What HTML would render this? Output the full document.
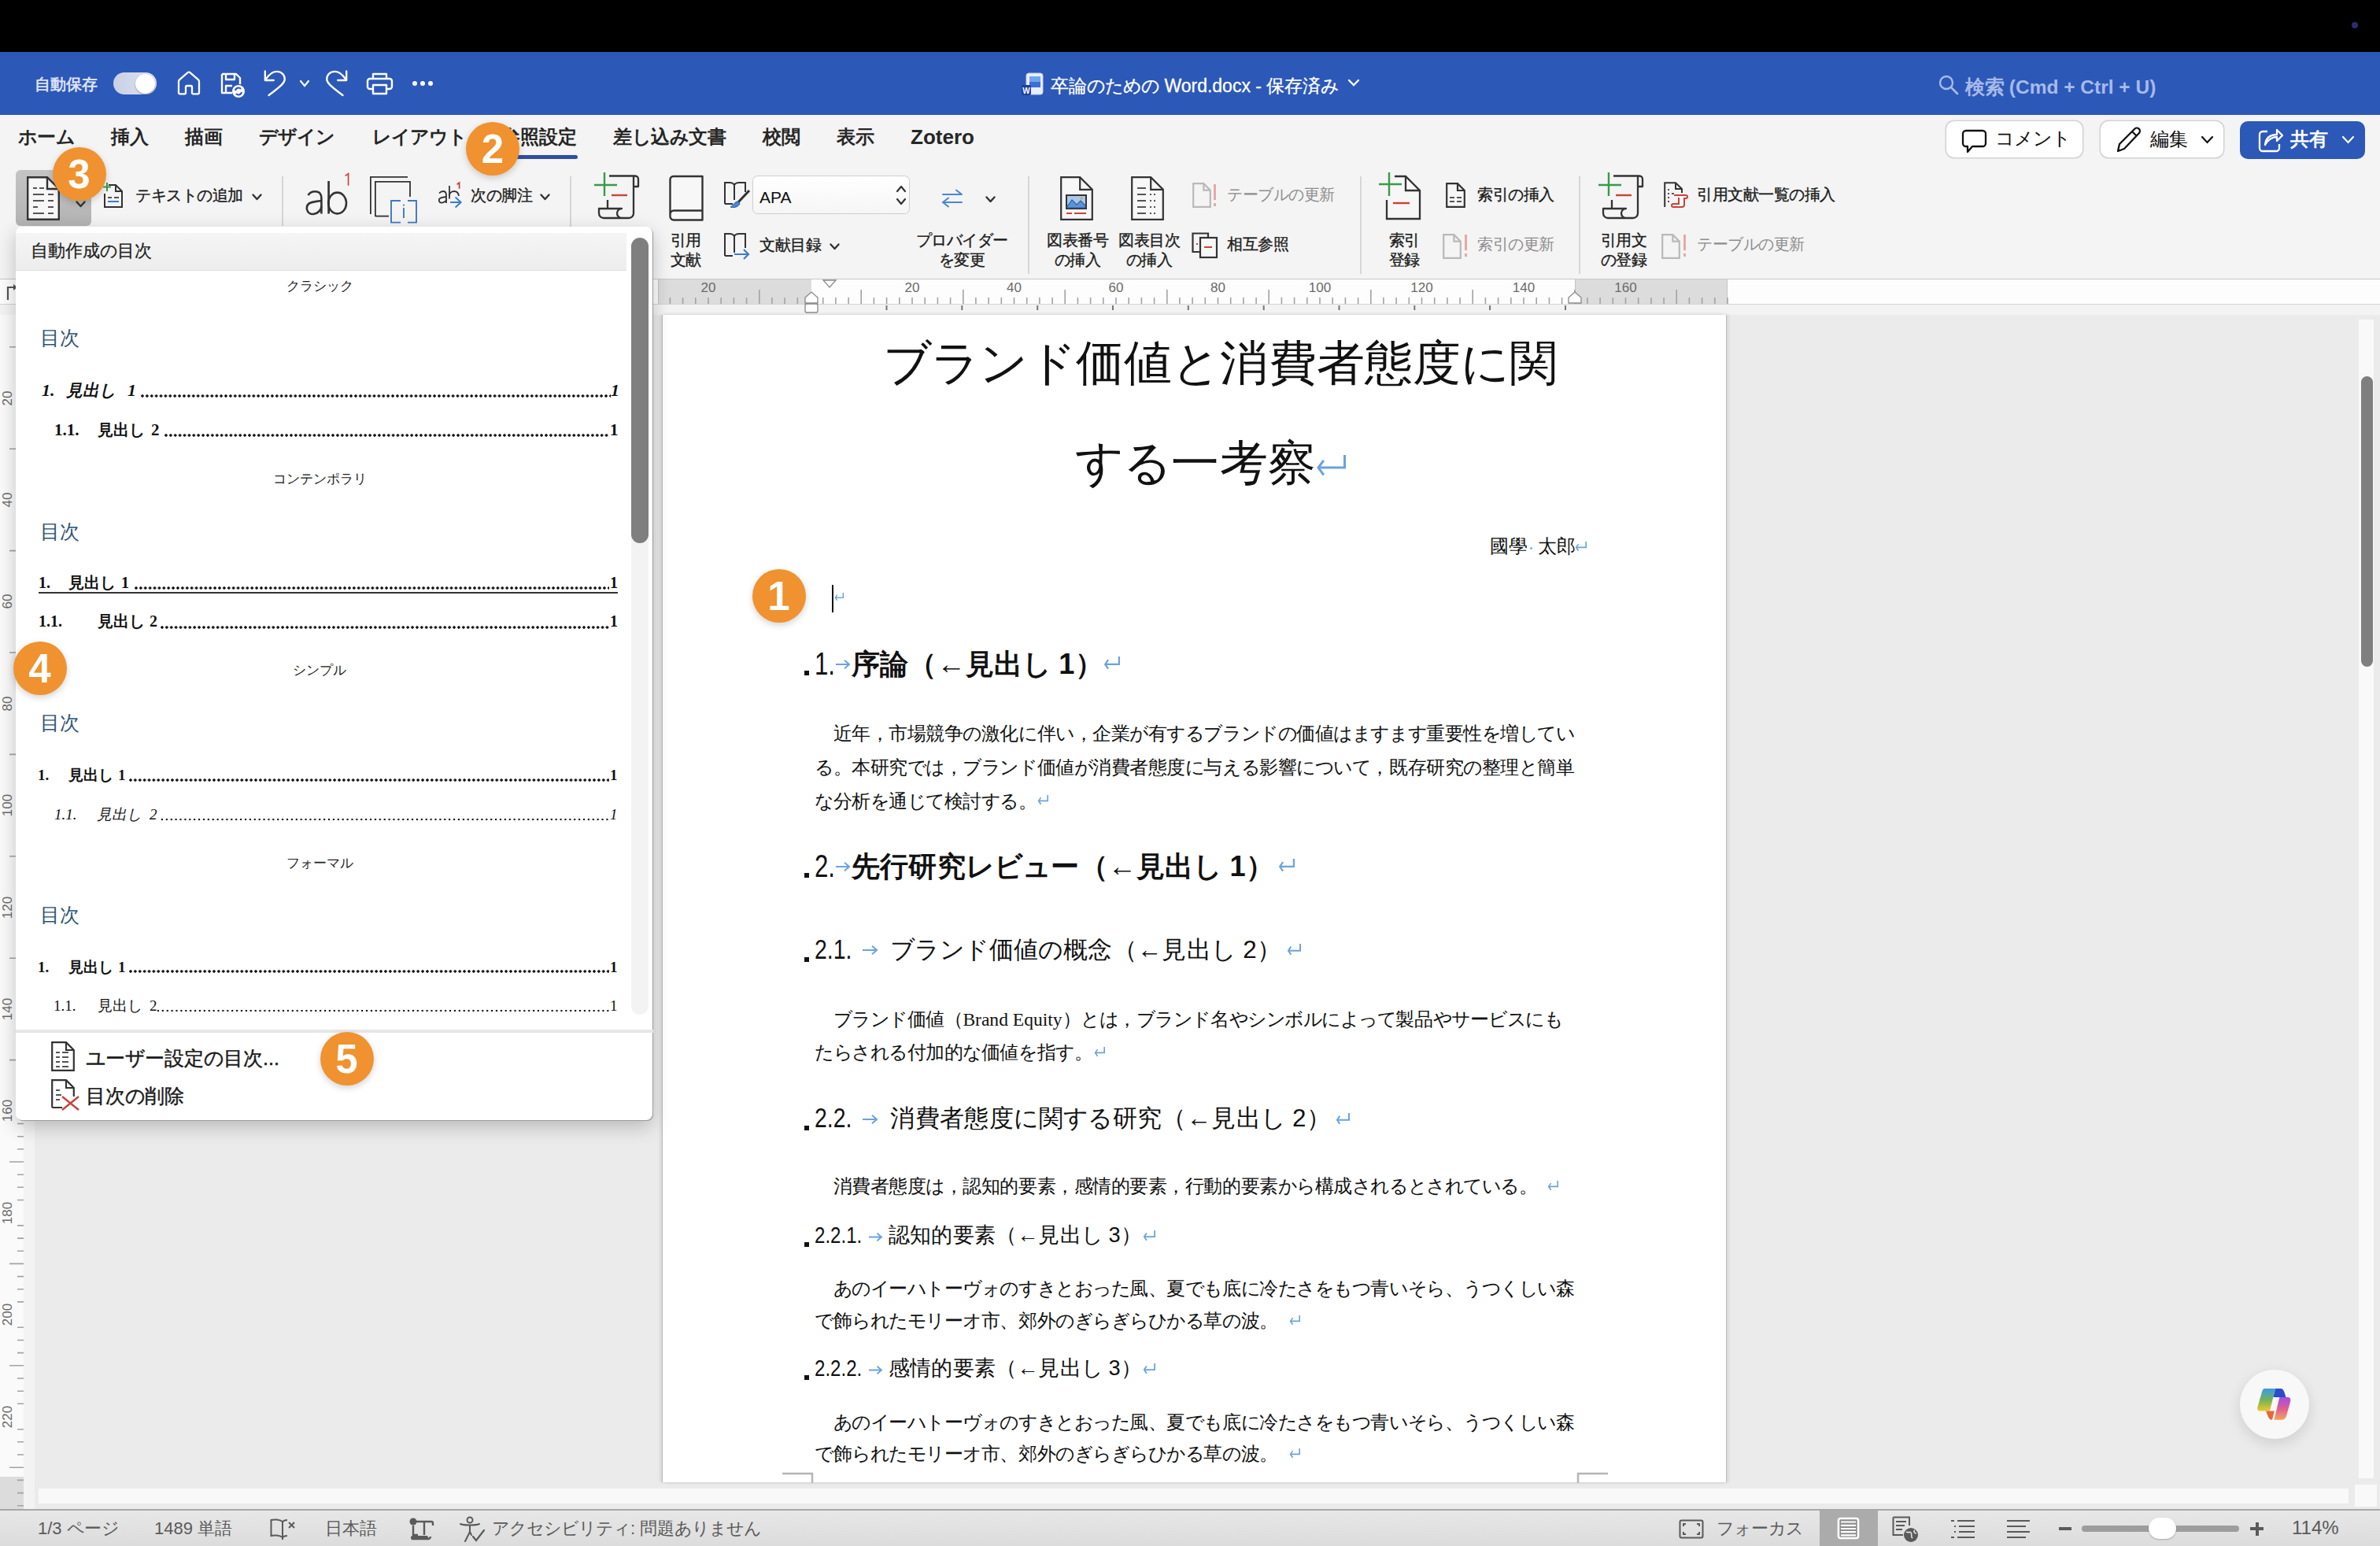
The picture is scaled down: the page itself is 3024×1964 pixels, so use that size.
<!DOCTYPE html>
<html><head><meta charset="utf-8">
<style>
html,body{margin:0;padding:0;}
body{width:3024px;height:1964px;position:relative;overflow:hidden;background:#ebebeb;font-family:"Liberation Sans",sans-serif;color:#222;}
.a{position:absolute;}
.t{position:absolute;white-space:nowrap;line-height:1;}
svg{position:absolute;overflow:visible;}
c{display:inline-block;width:1em;text-align:center;font-family:"Liberation Sans",sans-serif;font-style:normal;}
.it c{transform:skewX(-12deg);}
.circ{position:absolute;width:68px;height:68px;border-radius:50%;background:#f0922f;color:#fff;font:bold 51px/70px "Liberation Sans",sans-serif;text-align:center;box-shadow:0 3px 8px rgba(0,0,0,0.18);}
</style></head><body>
<!-- top black bar -->
<div class="a" style="left:0;top:0;width:3024px;height:66px;background:#000"></div>
<div class="a" style="left:2988px;top:28px;width:8px;height:8px;border-radius:50%;background:#2f2b72"></div>
<!-- title bar -->
<div class="a" id="titlebar" style="left:0;top:66px;width:3024px;height:80px;background:#2c58b8"></div>
<!-- title bar content -->
<div class="t" style="left:44px;top:97px;font-size:20px;font-weight:bold;color:#dde2f4"><c>自</c><c>動</c><c>保</c><c>存</c></div>
<div class="a" style="left:144px;top:92px;width:55px;height:28px;border-radius:14px;background:linear-gradient(90deg,#c9d0e6,#dfe3f0)"></div>
<div class="a" style="left:172px;top:94px;width:25px;height:25px;border-radius:50%;background:#fff;box-shadow:0 1px 2px rgba(0,0,0,0.35)"></div>
<svg style="left:225px;top:90px" width="30" height="31" viewBox="0 0 30 31"><path d="M2 13.5 C2 12.5 2.4 11.8 3.2 11.1 L13.3 2.4 C14.3 1.5 15.7 1.5 16.7 2.4 L26.8 11.1 C27.6 11.8 28 12.5 28 13.5 V27.5 C28 28.6 27.3 29.3 26.2 29.3 H20.5 C19.6 29.3 19 28.7 19 27.8 V20.5 C19 19.6 18.4 19 17.5 19 H12.5 C11.6 19 11 19.6 11 20.5 V27.8 C11 28.7 10.4 29.3 9.5 29.3 H3.8 C2.7 29.3 2 28.6 2 27.5 Z" fill="none" stroke="#fff" stroke-width="2.3" stroke-linejoin="round"/></svg>
<svg style="left:279px;top:91px" width="34" height="34" viewBox="0 0 34 34"><path d="M3 3 H21 L26 8 V16 M3 3 V27 H16 M8 3 V10 H19 V3 M8 27 V18 H16" fill="none" stroke="#fff" stroke-width="2.4" stroke-linejoin="round"/><circle cx="24" cy="25" r="8" fill="#fff"/><path d="M20 24 a4 4 0 0 1 7-2 M28 26 a4 4 0 0 1 -7 2" fill="none" stroke="#2c58b8" stroke-width="2"/></svg>
<svg style="left:335px;top:90px" width="30" height="34" viewBox="0 0 30 34"><path d="M1.8 0.5 V12 H12.8 M2.5 11 C7 4 11 0.8 16.5 0.8 C22.5 0.8 26.8 5 26.8 10.5 C26.8 14.5 24 18 6.5 31" fill="none" stroke="#fff" stroke-width="2.3" stroke-linecap="round" stroke-linejoin="round"/></svg>
<svg style="left:380px;top:101px" width="14" height="10" viewBox="0 0 14 10"><path d="M2 2 L7 8 L12 2" fill="none" stroke="#fff" stroke-width="2.2" stroke-linecap="round"/></svg>
<svg style="left:412px;top:90px" width="30" height="34" viewBox="0 0 30 34"><g transform="translate(30,0) scale(-1,1)"><path d="M1.8 0.5 V12 H12.8 M2.5 11 C7 4 11 0.8 16.5 0.8 C22.5 0.8 26.8 5 26.8 10.5 C26.8 14.5 24 18 6.5 31" fill="none" stroke="#fff" stroke-width="2.3" stroke-linecap="round" stroke-linejoin="round"/></g></svg>
<svg style="left:466px;top:91px" width="33" height="30" viewBox="0 0 33 30"><path d="M8 9 V3 H25 V9 M8 22 H4 a3 3 0 0 1 -3 -3 V12 a3 3 0 0 1 3 -3 H29 a3 3 0 0 1 3 3 V19 a3 3 0 0 1 -3 3 H25 M8 17 H25 V28 H8 Z" fill="none" stroke="#fff" stroke-width="2.4" stroke-linejoin="round"/></svg>
<div class="a" style="left:524px;top:103px;width:6px;height:6px;border-radius:50%;background:#fff"></div>
<div class="a" style="left:534px;top:103px;width:6px;height:6px;border-radius:50%;background:#fff"></div>
<div class="a" style="left:544px;top:103px;width:6px;height:6px;border-radius:50%;background:#fff"></div>
<!-- doc title -->
<svg style="left:1297px;top:92px" width="30" height="30" viewBox="0 0 30 30"><rect x="7" y="1" width="21" height="27" rx="3" fill="#e9eefb" stroke="#c5cde6"/><rect x="11" y="5" width="14" height="14" fill="#6fa7ef"/><rect x="11" y="12" width="14" height="7" fill="#3f6ed6"/><rect x="1" y="16" width="12" height="13" rx="2" fill="#1d3f9c"/><text x="7" y="26.5" font-size="10" font-weight="bold" fill="#fff" text-anchor="middle" font-family="Liberation Sans">W</text></svg>
<div class="t" style="left:1335px;top:98px;font-size:23px;color:#fff;-webkit-text-stroke:0.3px #fff"><c>卒</c><c>論</c><c>の</c><c>た</c><c>め</c><c>の</c> Word.docx - <c>保</c><c>存</c><c>済</c><c>み</c></div>
<svg style="left:1712px;top:100px" width="16" height="10" viewBox="0 0 16 10"><path d="M2 2 L8 8 L14 2" fill="none" stroke="#fff" stroke-width="2.4" stroke-linecap="round"/></svg>
<!-- search -->
<svg style="left:2463px;top:95px" width="26" height="26" viewBox="0 0 26 26"><circle cx="10" cy="10" r="8" fill="none" stroke="#a8baea" stroke-width="2.4"/><path d="M16 16 L24 24" stroke="#a8baea" stroke-width="2.6" stroke-linecap="round"/></svg>
<div class="t" style="left:2497px;top:99px;font-size:24.5px;font-weight:bold;color:#a8baea"><c>検</c><c>索</c> (Cmd + Ctrl + U)</div>
<!-- ribbon -->
<div class="a" id="ribbon" style="left:0;top:146px;width:3024px;height:208px;background:#f4f4f4;border-bottom:1px solid #c8c8c8"></div>
<!-- tabs -->
<div class="t" style="left:23px;top:162px;font-size:24px;font-weight:bold;color:#262626"><c>ホ</c><c>ー</c><c>ム</c></div>
<div class="t" style="left:141px;top:162px;font-size:24px;font-weight:bold;color:#262626"><c>挿</c><c>入</c></div>
<div class="t" style="left:235px;top:162px;font-size:24px;font-weight:bold;color:#262626"><c>描</c><c>画</c></div>
<div class="t" style="left:329px;top:162px;font-size:24px;font-weight:bold;color:#262626"><c>デ</c><c>ザ</c><c>イ</c><c>ン</c></div>
<div class="t" style="left:473px;top:162px;font-size:24px;font-weight:bold;color:#262626"><c>レ</c><c>イ</c><c>ア</c><c>ウ</c><c>ト</c></div>
<div class="t" style="left:637px;top:162px;font-size:24px;font-weight:bold;color:#262626"><c>参</c><c>照</c><c>設</c><c>定</c></div>
<div class="a" style="left:655px;top:197px;width:79px;height:5px;border-radius:3px;background:#2f4f9e"></div>
<div class="t" style="left:779px;top:162px;font-size:24px;font-weight:bold;color:#262626"><c>差</c><c>し</c><c>込</c><c>み</c><c>文</c><c>書</c></div>
<div class="t" style="left:969px;top:162px;font-size:24px;font-weight:bold;color:#262626"><c>校</c><c>閲</c></div>
<div class="t" style="left:1063px;top:162px;font-size:24px;font-weight:bold;color:#262626"><c>表</c><c>示</c></div>
<div class="t" style="left:1157px;top:161px;font-size:26px;font-weight:bold;color:#262626">Zotero</div>
<!-- right buttons -->
<div class="a" style="left:2473px;top:154px;width:173px;height:46px;border-radius:10px;background:#fff;box-shadow:0 0 0 1.5px #d2d2d2"></div>
<svg style="left:2492px;top:164px" width="34" height="32" viewBox="0 0 34 32"><path d="M6 2 H27 a4 4 0 0 1 4 4 V18 a4 4 0 0 1 -4 4 H14 L8 29 V22 H6 a4 4 0 0 1 -4 -4 V6 a4 4 0 0 1 4 -4 Z" fill="none" stroke="#111" stroke-width="2.3" stroke-linejoin="round"/></svg>
<div class="t" style="left:2535px;top:164px;font-size:24px;color:#111"><c>コ</c><c>メ</c><c>ン</c><c>ト</c></div>
<div class="a" style="left:2669px;top:154px;width:156px;height:46px;border-radius:10px;background:#fff;box-shadow:0 0 0 1.5px #d2d2d2"></div>
<svg style="left:2688px;top:161px" width="34" height="34" viewBox="0 0 34 34"><path d="M3 31 L5 22 L24 3 a3.5 3.5 0 0 1 6 5 L11 28 Z M21 6 L27 12" fill="none" stroke="#111" stroke-width="2.3" stroke-linejoin="round"/></svg>
<div class="t" style="left:2732px;top:165px;font-size:24px;color:#111"><c>編</c><c>集</c></div>
<svg style="left:2796px;top:172px" width="17" height="11" viewBox="0 0 17 11"><path d="M2 2 L8.5 9 L15 2" fill="none" stroke="#111" stroke-width="2.2" stroke-linecap="round"/></svg>
<div class="a" style="left:2846px;top:154px;width:159px;height:48px;border-radius:10px;background:#2c58b8"></div>
<svg style="left:2868px;top:161px" width="34" height="34" viewBox="0 0 34 34"><path d="M13 6 H7 a4 4 0 0 0 -4 4 V27 a4 4 0 0 0 4 4 H24 a4 4 0 0 0 4 -4 V22 M10 23 C11 14 17 10 25 10 V4 L32 11 L25 18 V13 C19 13 14 16 10 23 Z" fill="none" stroke="#fff" stroke-width="2.3" stroke-linejoin="round"/></svg>
<div class="t" style="left:2910px;top:165px;font-size:24px;font-weight:bold;color:#fff"><c>共</c><c>有</c></div>
<svg style="left:2975px;top:172px" width="17" height="11" viewBox="0 0 17 11"><path d="M2 2 L8.5 9 L15 2" fill="none" stroke="#fff" stroke-width="2.2" stroke-linecap="round"/></svg>
<!-- ribbon tools -->
<div class="a" style="left:20px;top:216px;width:96px;height:71px;border-radius:6px;background:linear-gradient(#c4c4c4,#b3b3b3)"></div>
<svg style="left:34px;top:224px" width="42" height="56" viewBox="0 0 42 56"><path d="M1.2 1.2 H26 L40.8 16 V54.8 H1.2 Z" fill="#f7f7f7" stroke="#333" stroke-width="2.4" stroke-linejoin="miter"/><path d="M26 1.2 V16 H40.8" fill="none" stroke="#333" stroke-width="2.4"/><path d="M8 15 H13 M16 15 H22 M8 23 H22 M27 23 H34 M8 31 H22 M27 31 H34 M8 39 H14 M27 39 H34 M8 47 H22 M27 47 H34" stroke="#555" stroke-width="2.2"/></svg>
<svg style="left:96px;top:255px" width="13" height="9" viewBox="0 0 13 9"><path d="M1.5 1.5 L6.5 7 L11.5 1.5" fill="none" stroke="#333" stroke-width="2.4" stroke-linecap="round" stroke-linejoin="round"/></svg>
<svg style="left:131px;top:231px" width="26" height="34" viewBox="0 0 26 34"><path d="M7 4 H16 L24 12 V32 H2 V15" fill="none" stroke="#333" stroke-width="2"/><path d="M16 4 V12 H24" fill="none" stroke="#333" stroke-width="2"/><path d="M5 1 V12 M0 6.5 H10" stroke="#3a9a4a" stroke-width="2"/><path d="M6 20 H11 M14 20 H20 M6 25 H11 M14 25 H20" stroke="#555" stroke-width="1.8"/><path d="M6 25 H20" stroke="#3d7cc9" stroke-width="2"/></svg>
<div class="t" style="left:172px;top:239px;font-size:19.5px;color:#1c1c1c;-webkit-text-stroke:0.35px #1c1c1c"><c>テ</c><c>キ</c><c>ス</c><c>ト</c><c>の</c><c>追</c><c>加</c></div>
<svg style="left:320px;top:246px" width="13" height="9" viewBox="0 0 13 9"><path d="M1.5 1.5 L6.5 7 L11.5 1.5" fill="none" stroke="#333" stroke-width="2.4" stroke-linecap="round" stroke-linejoin="round"/></svg>
<div class="a" style="left:358px;top:224px;width:2px;height:63px;background:#d6d6d6"></div>
<svg style="left:380px;top:210px" width="70" height="70" viewBox="0 0 70 70"><path d="M37.6 20 V61.5" stroke="#333" stroke-width="2.7"/><ellipse cx="48.6" cy="48" rx="11.4" ry="13.4" fill="none" stroke="#333" stroke-width="2.6"/><path d="M11.5 38 C14 34 18 33.3 20.5 33.3 C26 33.3 28.4 36.5 28.4 42 V61.5" fill="none" stroke="#333" stroke-width="2.6"/><path d="M28.4 45 C20 46 16 46.8 13.5 48 C10 50 9.5 53 10 56 C11 60.5 15 62.5 19 61.8 C24 61 28 57 28.4 52" fill="none" stroke="#333" stroke-width="2.6"/><path d="M58.6 13.4 L62.6 10.6 V25.8" fill="none" stroke="#c8443a" stroke-width="1.7"/></svg>
<svg style="left:469px;top:223px" width="64" height="64" viewBox="0 0 64 64"><path d="M1.9 49 V1.9 H49" fill="none" stroke="#333" stroke-width="1.8"/><path d="M7.9 52 V7.9 H52 V27" fill="none" stroke="#333" stroke-width="1.8"/><path d="M7.9 51.6 H25" stroke="#333" stroke-width="1.8"/><path d="M40 32 H28 V59.6 H40 M49 32 H60 V59.6 H49" fill="none" stroke="#4079b8" stroke-width="1.9"/><path d="M44 41 V54" stroke="#4079b8" stroke-width="1.9"/><circle cx="44" cy="37.6" r="1.1" fill="#4079b8"/></svg>
<svg style="left:550px;top:225px" width="50" height="45" viewBox="0 0 50 45"><path d="M21 11 V27.6" stroke="#333" stroke-width="1.8"/><path d="M21 24 C21 20 24 18 27 18 C30 18 32.5 20 32.9 24" fill="none" stroke="#333" stroke-width="1.8"/><path d="M8 20.5 C9.5 18.8 11.5 18 13 18 C16 18 17 20 17 23 V32.9" fill="none" stroke="#333" stroke-width="1.8"/><path d="M17 25 C13 25.5 10.5 26 9 27 C7 28.5 7.5 32.5 11 32.6 C14 32.7 17 30.5 17 28.5" fill="none" stroke="#333" stroke-width="1.8"/><path d="M30.6 9.3 L33.6 7.3 V14.8" fill="none" stroke="#c8443a" stroke-width="1.8"/><path d="M22 32 H35.5 M28.6 25.4 L35.6 32 L28.6 38.5" fill="none" stroke="#3d7cc9" stroke-width="2"/></svg>
<div class="t" style="left:598px;top:239px;font-size:19.5px;color:#1c1c1c;-webkit-text-stroke:0.35px #1c1c1c"><c>次</c><c>の</c><c>脚</c><c>注</c></div>
<svg style="left:686px;top:246px" width="13" height="9" viewBox="0 0 13 9"><path d="M1.5 1.5 L6.5 7 L11.5 1.5" fill="none" stroke="#333" stroke-width="2.4" stroke-linecap="round" stroke-linejoin="round"/></svg>
<div class="a" style="left:724px;top:224px;width:2px;height:124px;background:#d6d6d6"></div>
<svg style="left:755px;top:219px" width="60" height="62" viewBox="0 0 60 62"><path d="M19 4.5 H52 a4 4 0 0 1 4 4 V18 H50 M52 4.5 a2 2 0 0 0 -2 2 V52 a6 6 0 0 1 -6 6 H12 a6 6 0 0 1 -6 -6 V46 H35 a6 6 0 0 0 0 12 M17 46 V35" fill="none" stroke="#333" stroke-width="2.3" stroke-linejoin="round"/><path d="M13 0 V30 M0 16 H29" stroke="#3a9a4a" stroke-width="2.4"/><path d="M22 29 H42" stroke="#c8443a" stroke-width="2.4"/></svg>
<svg style="left:850px;top:223px" width="44" height="58" viewBox="0 0 44 58"><path d="M1.5 49 V5 a4 4 0 0 1 4 -4 H42.5 V56.5 H6 a4.5 4.5 0 0 1 -4.5 -4.5 V49 a4.5 4.5 0 0 1 4.5 -4.5 H42.5" fill="#f7f7f7" stroke="#333" stroke-width="2.4" stroke-linejoin="round"/></svg>
<div class="t" style="left:811px;width:120px;text-align:center;top:293px;font-size:19.5px;color:#1c1c1c;-webkit-text-stroke:0.35px #1c1c1c;line-height:25px"><c>引</c><c>用</c><br><c>文</c><c>献</c></div>
<svg style="left:919px;top:230px" width="36" height="36" viewBox="0 0 36 36"><path d="M2 29 V2 H8 C11 2 13 3 14 5 C15 3 17 2 20 2 H28 V14 M14 5 V24 M2 29 H12" fill="none" stroke="#333" stroke-width="2"/><path d="M33 12 L18 28" stroke="#333" stroke-width="3"/><path d="M19 26 C14 26 13 31 9 33 C16 35 21 31 21 28 Z" fill="#4a86d0" stroke="#2f5e9e" stroke-width="1"/></svg>
<div class="a" style="left:957px;top:224px;width:198px;height:47px;border-radius:6px;background:linear-gradient(#fff,#f6f6f6);box-shadow:0 0 0 1px #cfcfcf"></div>
<div class="t" style="left:965px;top:240px;font-size:21px;color:#111">APA</div>
<svg style="left:1138px;top:234px" width="14" height="28" viewBox="0 0 14 28"><path d="M2 9 L7 3 L12 9 M2 19 L7 25 L12 19" fill="none" stroke="#333" stroke-width="2.2" stroke-linecap="round" stroke-linejoin="round"/></svg>
<svg style="left:1196px;top:240px" width="28" height="24" viewBox="0 0 28 24"><path d="M2 7 H26 M19 1.5 L26 7 M2 17 H26 M9 11.5 L2 17 L9 22.5" fill="none" stroke="#4a86d0" stroke-width="2" stroke-linecap="round"/></svg>
<svg style="left:1252px;top:249px" width="13" height="9" viewBox="0 0 13 9"><path d="M1.5 1.5 L6.5 7 L11.5 1.5" fill="none" stroke="#333" stroke-width="2.4" stroke-linecap="round" stroke-linejoin="round"/></svg>
<svg style="left:919px;top:295px" width="36" height="34" viewBox="0 0 36 34"><path d="M2 30 V2 H8 C11 2 13 3 14 5 C15 3 17 2 20 2 H28 V20 M14 5 V26 M2 30 H12" fill="none" stroke="#333" stroke-width="2"/><path d="M14 28 H32 M26 22 L32 28 L26 34" fill="none" stroke="#3d7cc9" stroke-width="2.2"/></svg>
<div class="t" style="left:965px;top:302px;font-size:19.5px;color:#1c1c1c;-webkit-text-stroke:0.35px #1c1c1c"><c>文</c><c>献</c><c>目</c><c>録</c></div>
<svg style="left:1054px;top:309px" width="13" height="9" viewBox="0 0 13 9"><path d="M1.5 1.5 L6.5 7 L11.5 1.5" fill="none" stroke="#333" stroke-width="2.4" stroke-linecap="round" stroke-linejoin="round"/></svg>
<div class="t" style="left:1162px;width:120px;text-align:center;top:293px;font-size:19.5px;color:#1c1c1c;-webkit-text-stroke:0.35px #1c1c1c;line-height:25px"><c>プ</c><c>ロ</c><c>バ</c><c>イ</c><c>ダ</c><c>ー</c><br><c>を</c><c>変</c><c>更</c></div>
<div class="a" style="left:1306px;top:224px;width:2px;height:124px;background:#d6d6d6"></div>
<svg style="left:1347px;top:224px" width="42" height="56" viewBox="0 0 42 56"><path d="M1.2 1.2 H25.2 L40.8 16.8 V54.8 H1.2 Z" fill="#f7f7f7" stroke="#333" stroke-width="2.2"/><path d="M25.2 1.2 V16.8 H40.8" fill="none" stroke="#333" stroke-width="2.2"/><rect x="8" y="24" width="25" height="17" fill="#a9c8ec" stroke="#333" stroke-width="2"/><path d="M9 38 L15 30 L21 36 L26 31 L32 37 V40 H9 Z" fill="#5b93d6" stroke="#2f5e9e" stroke-width="1.2"/><circle cx="27" cy="28" r="1.5" fill="#e8a030"/><path d="M8 47 H15 M18 47 H33" stroke="#c8443a" stroke-width="2.2"/></svg>
<div class="t" style="left:1309px;width:120px;text-align:center;top:293px;font-size:19.5px;color:#1c1c1c;-webkit-text-stroke:0.35px #1c1c1c;line-height:25px"><c>図</c><c>表</c><c>番</c><c>号</c><br><c>の</c><c>挿</c><c>入</c></div>
<svg style="left:1437px;top:224px" width="42" height="56" viewBox="0 0 42 56"><path d="M1.2 1.2 H25.2 L40.8 16.8 V54.8 H1.2 Z" fill="#f7f7f7" stroke="#333" stroke-width="2.2"/><path d="M25.2 1.2 V16.8 H40.8" fill="none" stroke="#333" stroke-width="2.2"/><path d="M8 15 H19 M8 23 H19 M24 23 H26 M29 23 H31 M8 31 H19 M24 31 H26 M29 31 H31 M8 39 H19 M24 39 H26 M29 39 H31 M8 47 H19 M24 47 H26 M29 47 H31" stroke="#555" stroke-width="2"/></svg>
<div class="t" style="left:1400px;width:120px;text-align:center;top:293px;font-size:19.5px;color:#1c1c1c;-webkit-text-stroke:0.35px #1c1c1c;line-height:25px"><c>図</c><c>表</c><c>目</c><c>次</c><br><c>の</c><c>挿</c><c>入</c></div>
<svg style="left:1515px;top:232px" width="24" height="32" viewBox="0 0 24 32"><path d="M1.2 1.2 H14.4 L22.8 9.6 V30.8 H1.2 Z" fill="none" stroke="#b9b9b9" stroke-width="2.2"/><path d="M14.4 1.2 V9.6 H22.8" fill="none" stroke="#b9b9b9" stroke-width="2.2"/></svg>
<div class="a" style="left:1542px;top:234px;width:3px;height:20px;background:#e6a9a4"></div><div class="a" style="left:1542px;top:258px;width:3px;height:4px;background:#e6a9a4"></div>
<div class="t" style="left:1559px;top:238px;font-size:19.5px;color:#8e8e8e"><c>テ</c><c>ー</c><c>ブ</c><c>ル</c><c>の</c><c>更</c><c>新</c></div>
<svg style="left:1514px;top:295px" width="34" height="34" viewBox="0 0 34 34"><path d="M21 7 V1.5 H1.5 V25 H10" fill="none" stroke="#333" stroke-width="2.2"/><rect x="11" y="7" width="21" height="25" fill="#f7f7f7" stroke="#333" stroke-width="2.2"/><path d="M6 15 H8 M16 19 H26" stroke="#c8443a" stroke-width="2.2"/></svg>
<div class="t" style="left:1559px;top:301px;font-size:19.5px;color:#1c1c1c;-webkit-text-stroke:0.35px #1c1c1c"><c>相</c><c>互</c><c>参</c><c>照</c></div>
<div class="a" style="left:1728px;top:224px;width:2px;height:124px;background:#d6d6d6"></div>
<svg style="left:1752px;top:219px" width="56" height="62" viewBox="0 0 56 62"><path d="M20 5 H34 L52 23 V59 H10 V35" fill="#f7f7f7" stroke="#333" stroke-width="2.3"/><path d="M34 5 V23 H52" fill="none" stroke="#333" stroke-width="2.3"/><path d="M13 0 V30 M0 15 H29" stroke="#3a9a4a" stroke-width="2.4"/><path d="M18 39 H39" stroke="#c8443a" stroke-width="2.4"/></svg>
<div class="t" style="left:1724px;width:120px;text-align:center;top:293px;font-size:19.5px;color:#1c1c1c;-webkit-text-stroke:0.35px #1c1c1c;line-height:25px"><c>索</c><c>引</c><br><c>登</c><c>録</c></div>
<svg style="left:1837px;top:232px" width="25" height="32" viewBox="0 0 25 32"><path d="M1.2 1.2 H15.0 L23.8 10.0 V30.8 H1.2 Z" fill="#f7f7f7" stroke="#333" stroke-width="2.2"/><path d="M15.0 1.2 V10.0 H23.8" fill="none" stroke="#333" stroke-width="2.2"/><path d="M5 19 H11 M14 19 H20 M5 24 H11 M14 24 H20" stroke="#555" stroke-width="1.8"/></svg>
<div class="t" style="left:1877px;top:238px;font-size:19.5px;color:#1c1c1c;-webkit-text-stroke:0.35px #1c1c1c"><c>索</c><c>引</c><c>の</c><c>挿</c><c>入</c></div>
<svg style="left:1833px;top:297px" width="24" height="32" viewBox="0 0 24 32"><path d="M1.2 1.2 H14.4 L22.8 9.6 V30.8 H1.2 Z" fill="none" stroke="#b9b9b9" stroke-width="2.2"/><path d="M14.4 1.2 V9.6 H22.8" fill="none" stroke="#b9b9b9" stroke-width="2.2"/></svg>
<div class="a" style="left:1861px;top:298px;width:3px;height:20px;background:#e6a9a4"></div><div class="a" style="left:1861px;top:322px;width:3px;height:4px;background:#e6a9a4"></div>
<div class="t" style="left:1877px;top:301px;font-size:19.5px;color:#8e8e8e"><c>索</c><c>引</c><c>の</c><c>更</c><c>新</c></div>
<div class="a" style="left:2006px;top:224px;width:2px;height:124px;background:#d6d6d6"></div>
<svg style="left:2031px;top:219px" width="60" height="62" viewBox="0 0 60 62"><path d="M19 4.5 H52 a4 4 0 0 1 4 4 V18 H50 M52 4.5 a2 2 0 0 0 -2 2 V52 a6 6 0 0 1 -6 6 H12 a6 6 0 0 1 -6 -6 V46 H35 a6 6 0 0 0 0 12 M17 46 V35" fill="none" stroke="#333" stroke-width="2.3" stroke-linejoin="round"/><path d="M13 0 V30 M0 16 H29" stroke="#3a9a4a" stroke-width="2.4"/><path d="M22 29 H42" stroke="#c8443a" stroke-width="2.4"/></svg>
<div class="t" style="left:2003px;width:120px;text-align:center;top:293px;font-size:19.5px;color:#1c1c1c;-webkit-text-stroke:0.35px #1c1c1c;line-height:25px"><c>引</c><c>用</c><c>文</c><br><c>の</c><c>登</c><c>録</c></div>
<svg style="left:2114px;top:231px" width="32" height="34" viewBox="0 0 32 34"><path d="M1.2 32 V1.2 H15 L23 9 V14" fill="none" stroke="#333" stroke-width="2"/><path d="M15 1.2 V9 H23" fill="none" stroke="#333" stroke-width="2"/><path d="M5 10 H7 M5 15 H7 M10 15 H13 M5 20 H7 M5 25 H7" stroke="#555" stroke-width="1.8"/><path d="M13 17 H28 a2 2 0 0 1 0 4 H26 V29 a3 3 0 0 1 -3 3 H12 a2 2 0 0 1 0 -4 H19 V20" fill="#f7f7f7" stroke="#c8443a" stroke-width="2"/></svg>
<div class="t" style="left:2156px;top:238px;font-size:19.5px;color:#1c1c1c;-webkit-text-stroke:0.35px #1c1c1c"><c>引</c><c>用</c><c>文</c><c>献</c><c>一</c><c>覧</c><c>の</c><c>挿</c><c>入</c></div>
<svg style="left:2111px;top:297px" width="24" height="32" viewBox="0 0 24 32"><path d="M1.2 1.2 H14.4 L22.8 9.6 V30.8 H1.2 Z" fill="none" stroke="#b9b9b9" stroke-width="2.2"/><path d="M14.4 1.2 V9.6 H22.8" fill="none" stroke="#b9b9b9" stroke-width="2.2"/></svg>
<div class="a" style="left:2139px;top:298px;width:3px;height:20px;background:#e6a9a4"></div><div class="a" style="left:2139px;top:322px;width:3px;height:4px;background:#e6a9a4"></div>
<div class="t" style="left:2156px;top:301px;font-size:19.5px;color:#8e8e8e"><c>テ</c><c>ー</c><c>ブ</c><c>ル</c><c>の</c><c>更</c><c>新</c></div>
<!-- ruler -->
<div class="a" id="ruler" style="left:0;top:355px;width:3024px;height:31px;background:#fdfdfd;border-bottom:1px solid #d4d4d4"></div>
<div class="a" style="left:0;top:387px;width:3024px;height:13px;background:#f3f3f3"></div>
<!-- doc area -->

<div class="a" style="left:0;top:400px;width:30px;height:1518px;background:#fafafa"></div>
<div class="a" style="left:30px;top:400px;width:14px;height:1518px;background:#f3f3f3"></div>
<div class="a" id="page" style="left:842px;top:400px;width:1351px;height:1483px;background:#fff;box-shadow:-1px 0 0 #b9b9b9,1px 0 0 #bdbdbd,3px 0 4px rgba(0,0,0,0.10),-3px 0 4px rgba(0,0,0,0.10)"></div>
<div class="a" style="left:836px;top:355px;width:195px;height:31px;background:#dcdcdc;box-shadow:inset 1px 0 0 #c4c4c4"></div>
<div class="a" style="left:2001px;top:355px;width:194px;height:31px;background:#dcdcdc;box-shadow:inset 1px 0 0 #c4c4c4,inset -1px 0 0 #c4c4c4"></div>
<svg style="left:0;top:0" width="3024" height="400" viewBox="0 0 3024 400"><path d="M851.4 378V386M867.6 378V386M883.8 378V386M900.0 378V386M916.2 378V386M932.4 378V386M948.6 378V386M964.8 368V386M980.9 378V386M997.1 378V386M1013.3 378V386M1029.5 378V386M1045.7 378V386M1061.9 378V386M1078.1 378V386M1094.2 368V386M1110.4 378V386M1126.6 378V386M1142.8 378V386M1159.0 378V386M1175.2 378V386M1191.4 378V386M1207.6 378V386M1223.8 368V386M1239.9 378V386M1256.1 378V386M1272.3 378V386M1288.5 378V386M1304.7 378V386M1320.9 378V386M1337.1 378V386M1353.2 368V386M1369.4 378V386M1385.6 378V386M1401.8 378V386M1418.0 378V386M1434.2 378V386M1450.4 378V386M1466.6 378V386M1482.8 368V386M1498.9 378V386M1515.1 378V386M1531.3 378V386M1547.5 378V386M1563.7 378V386M1579.9 378V386M1596.1 378V386M1612.2 368V386M1628.4 378V386M1644.6 378V386M1660.8 378V386M1677.0 378V386M1693.2 378V386M1709.4 378V386M1725.6 378V386M1741.8 368V386M1757.9 378V386M1774.1 378V386M1790.3 378V386M1806.5 378V386M1822.7 378V386M1838.9 378V386M1855.1 378V386M1871.2 368V386M1887.4 378V386M1903.6 378V386M1919.8 378V386M1936.0 378V386M1952.2 378V386M1968.4 378V386M1984.6 378V386M2000.8 368V386M2016.9 378V386M2033.1 378V386M2049.3 378V386M2065.5 378V386M2081.7 378V386M2097.9 378V386M2114.1 378V386M2130.2 368V386M2146.4 378V386M2162.6 378V386M2178.8 378V386M2195.0 378V386" stroke="#a3a3a3" stroke-width="1.6"/><path d="M1126.5 388V394M1222.3 388V394M1318.2 388V394M1414.0 388V394M1509.8 388V394M1605.7 388V394M1701.5 388V394M1797.3 388V394M1893.1 388V394M1989.0 388V394" stroke="#777" stroke-width="2"/><path d="M1046 356 H1062 L1054 365 Z" fill="#fff" stroke="#888" stroke-width="1.3"/><path d="M1023 385 V378 L1031 371 L1039 378 V385 Z" fill="#fff" stroke="#888" stroke-width="1.3"/><rect x="1023" y="386" width="16" height="11" rx="2" fill="#fff" stroke="#888" stroke-width="1.3"/><path d="M1993 385 V378 L2001 371 L2009 378 V385 Z" fill="#fff" stroke="#888" stroke-width="1.3"/></svg>
<div class="t" style="left:870px;width:60px;text-align:center;top:357px;font-size:17px;color:#6a6a6a">20</div>
<div class="t" style="left:1129px;width:60px;text-align:center;top:357px;font-size:17px;color:#6a6a6a">20</div>
<div class="t" style="left:1258.5px;width:60px;text-align:center;top:357px;font-size:17px;color:#6a6a6a">40</div>
<div class="t" style="left:1388px;width:60px;text-align:center;top:357px;font-size:17px;color:#6a6a6a">60</div>
<div class="t" style="left:1517.5px;width:60px;text-align:center;top:357px;font-size:17px;color:#6a6a6a">80</div>
<div class="t" style="left:1647px;width:60px;text-align:center;top:357px;font-size:17px;color:#6a6a6a">100</div>
<div class="t" style="left:1776.5px;width:60px;text-align:center;top:357px;font-size:17px;color:#6a6a6a">120</div>
<div class="t" style="left:1906px;width:60px;text-align:center;top:357px;font-size:17px;color:#6a6a6a">140</div>
<div class="t" style="left:2035.5px;width:60px;text-align:center;top:357px;font-size:17px;color:#6a6a6a">160</div>
<svg style="left:8px;top:360px" width="14" height="22" viewBox="0 0 14 22"><path d="M2 21 V5 H10" fill="none" stroke="#555" stroke-width="2.2"/><path d="M9 1 L14 5 L9 9 Z" fill="#555"/></svg>
<div class="a" style="left:0;top:1876px;width:30px;height:42px;background:#dcdcdc"></div>
<svg style="left:0;top:0" width="40" height="1964" viewBox="0 0 40 1964"><path d="M22 408.5H30M22 424.6H30M12 440.8H30M22 457.0H30M22 473.2H30M22 489.3H30M22 521.7H30M22 537.9H30M22 554.0H30M12 570.2H30M22 586.4H30M22 602.6H30M22 618.7H30M22 651.1H30M22 667.2H30M22 683.4H30M12 699.6H30M22 715.8H30M22 732.0H30M22 748.1H30M22 780.5H30M22 796.7H30M22 812.8H30M12 829.0H30M22 845.2H30M22 861.4H30M22 877.5H30M22 909.9H30M22 926.1H30M22 942.2H30M12 958.4H30M22 974.6H30M22 990.8H30M22 1006.9H30M22 1039.3H30M22 1055.5H30M22 1071.6H30M12 1087.8H30M22 1104.0H30M22 1120.2H30M22 1136.3H30M22 1168.7H30M22 1184.8H30M22 1201.0H30M12 1217.2H30M22 1233.4H30M22 1249.6H30M22 1265.7H30M22 1298.1H30M22 1314.2H30M22 1330.4H30M12 1346.6H30M22 1362.8H30M22 1379.0H30M22 1395.1H30M22 1427.5H30M22 1443.7H30M22 1459.8H30M12 1476.0H30M22 1492.2H30M22 1508.3H30M22 1524.5H30M22 1556.9H30M22 1573.1H30M22 1589.2H30M12 1605.4H30M22 1621.6H30M22 1637.8H30M22 1653.9H30M22 1686.3H30M22 1702.5H30M22 1718.6H30M12 1734.8H30M22 1751.0H30M22 1767.2H30M22 1783.3H30M22 1815.7H30M22 1831.8H30M22 1848.0H30M12 1864.2H30M22 1880.4H30M22 1896.6H30M22 1912.7H30" stroke="#a3a3a3" stroke-width="1.6"/></svg>
<div class="t" style="left:-20px;top:496.5px;width:60px;height:18px;text-align:center;font-size:17px;color:#6a6a6a;transform:rotate(-90deg)">20</div>
<div class="t" style="left:-20px;top:625.9px;width:60px;height:18px;text-align:center;font-size:17px;color:#6a6a6a;transform:rotate(-90deg)">40</div>
<div class="t" style="left:-20px;top:755.3px;width:60px;height:18px;text-align:center;font-size:17px;color:#6a6a6a;transform:rotate(-90deg)">60</div>
<div class="t" style="left:-20px;top:884.7px;width:60px;height:18px;text-align:center;font-size:17px;color:#6a6a6a;transform:rotate(-90deg)">80</div>
<div class="t" style="left:-20px;top:1014.1px;width:60px;height:18px;text-align:center;font-size:17px;color:#6a6a6a;transform:rotate(-90deg)">100</div>
<div class="t" style="left:-20px;top:1143.5px;width:60px;height:18px;text-align:center;font-size:17px;color:#6a6a6a;transform:rotate(-90deg)">120</div>
<div class="t" style="left:-20px;top:1272.9px;width:60px;height:18px;text-align:center;font-size:17px;color:#6a6a6a;transform:rotate(-90deg)">140</div>
<div class="t" style="left:-20px;top:1402.3px;width:60px;height:18px;text-align:center;font-size:17px;color:#6a6a6a;transform:rotate(-90deg)">160</div>
<div class="t" style="left:-20px;top:1531.7px;width:60px;height:18px;text-align:center;font-size:17px;color:#6a6a6a;transform:rotate(-90deg)">180</div>
<div class="t" style="left:-20px;top:1661.1px;width:60px;height:18px;text-align:center;font-size:17px;color:#6a6a6a;transform:rotate(-90deg)">200</div>
<div class="t" style="left:-20px;top:1790.5px;width:60px;height:18px;text-align:center;font-size:17px;color:#6a6a6a;transform:rotate(-90deg)">220</div>
<!-- document content -->
<div class="t" style="left:1122px;top:431px;font-size:61.2px;font-family:'Liberation Sans',sans-serif;color:#111;"><c>ブ</c><c>ラ</c><c>ン</c><c>ド</c><c>価</c><c>値</c><c>と</c><c>消</c><c>費</c><c>者</c><c>態</c><c>度</c><c>に</c><c>関</c></div>
<div class="t" style="left:1366px;top:558px;font-size:61.2px;font-family:'Liberation Sans',sans-serif;color:#111;"><c>す</c><c>る</c><c>一</c><c>考</c><c>察</c></div>
<svg style="left:1672px;top:578px" width="38" height="26" viewBox="0 0 38 26"><path d="M36.5 0 V16.1 H3 M9.9 6.8 L3 16.1 L9.9 25.5" fill="none" stroke="#6aa3dc" stroke-width="3" stroke-linejoin="miter"/></svg>
<div class="t" style="left:1893px;top:682px;font-size:24px;font-family:'Liberation Serif',serif;color:#111;"><c>國</c><c>學</c></div><div class="a" style="left:1944px;top:695px;width:3px;height:3px;border-radius:50%;background:#7aaee0"></div><div class="t" style="left:1954px;top:682px;font-size:24px;font-family:'Liberation Serif',serif;color:#111;"><c>太</c><c>郎</c></div>
<svg style="left:2001px;top:688px" width="15" height="12" viewBox="0 0 15 12"><path d="M14.2 0 V7.4 H1.6 M4.6 3.1 L1.6 7.4 L4.6 11.8" fill="none" stroke="#6aa3dc" stroke-width="1.6"/></svg>
<div class="a" style="left:1057px;top:743px;width:2px;height:35px;background:#111"></div>
<svg style="left:1060px;top:753px" width="12" height="10" viewBox="0 0 12 10"><path d="M11.3 0 V6.2 H1.4 M3.8 2.6 L1.4 6.2 L3.8 9.8" fill="none" stroke="#6aa3dc" stroke-width="1.4" stroke-linejoin="miter"/></svg>
<div class="a" style="left:1022px;top:852px;width:6px;height:6px;background:#111"></div>
<div class="t" style="left:1035px;top:823px;font-size:40px;font-family:'Liberation Sans',sans-serif;color:#111;transform:scaleX(0.78);transform-origin:left">1.</div>
<svg style="left:1062px;top:838px" width="18" height="12" viewBox="0 0 18 12"><path d="M0 6.0 H17 M11.0 0.8 L17 6.0 L11.0 11.2" fill="none" stroke="#6aa3dc" stroke-width="2"/></svg>
<div class="t" style="left:1082px;top:826px;font-size:36.2px;font-family:'Liberation Sans',sans-serif;color:#111;font-weight:bold"><c>序</c><c>論</c><c>（</c><c>←</c><c>見</c><c>出</c><c>し</c> 1<c>）</c></div>
<svg style="left:1402px;top:834px" width="21" height="16" viewBox="0 0 21 16"><path d="M19.9 0 V9.9 H2.2 M6.1 4.2 L2.2 9.9 L6.1 15.7" fill="none" stroke="#6aa3dc" stroke-width="2.2" stroke-linejoin="miter"/></svg>
<div class="t" style="left:1035px;top:921px;font-size:23.56px;font-family:'Liberation Serif',serif;color:#111;"><c>　</c><c>近</c><c>年</c><c>，</c><c>市</c><c>場</c><c>競</c><c>争</c><c>の</c><c>激</c><c>化</c><c>に</c><c>伴</c><c>い</c><c>，</c><c>企</c><c>業</c><c>が</c><c>有</c><c>す</c><c>る</c><c>ブ</c><c>ラ</c><c>ン</c><c>ド</c><c>の</c><c>価</c><c>値</c><c>は</c><c>ま</c><c>す</c><c>ま</c><c>す</c><c>重</c><c>要</c><c>性</c><c>を</c><c>増</c><c>し</c><c>て</c><c>い</c></div>
<div class="t" style="left:1035px;top:964px;font-size:23.56px;font-family:'Liberation Serif',serif;color:#111;"><c>る</c><c>。</c><c>本</c><c>研</c><c>究</c><c>で</c><c>は</c><c>，</c><c>ブ</c><c>ラ</c><c>ン</c><c>ド</c><c>価</c><c>値</c><c>が</c><c>消</c><c>費</c><c>者</c><c>態</c><c>度</c><c>に</c><c>与</c><c>え</c><c>る</c><c>影</c><c>響</c><c>に</c><c>つ</c><c>い</c><c>て</c><c>，</c><c>既</c><c>存</c><c>研</c><c>究</c><c>の</c><c>整</c><c>理</c><c>と</c><c>簡</c><c>単</c></div>
<div class="t" style="left:1035px;top:1007px;font-size:23.56px;font-family:'Liberation Serif',serif;color:#111;"><c>な</c><c>分</c><c>析</c><c>を</c><c>通</c><c>じ</c><c>て</c><c>検</c><c>討</c><c>す</c><c>る</c><c>。</c></div>
<svg style="left:1318px;top:1010px" width="14" height="12" viewBox="0 0 14 12"><path d="M13.2 0 V7.4 H1.6 M4.6 3.1 L1.6 7.4 L4.6 11.8" fill="none" stroke="#6aa3dc" stroke-width="1.6" stroke-linejoin="miter"/></svg>
<div class="a" style="left:1022px;top:1109px;width:6px;height:6px;background:#111"></div>
<div class="t" style="left:1035px;top:1080px;font-size:40px;font-family:'Liberation Sans',sans-serif;color:#111;transform:scaleX(0.78);transform-origin:left">2.</div>
<svg style="left:1062px;top:1095px" width="18" height="12" viewBox="0 0 18 12"><path d="M0 6.0 H17 M11.0 0.8 L17 6.0 L11.0 11.2" fill="none" stroke="#6aa3dc" stroke-width="2"/></svg>
<div class="t" style="left:1082px;top:1083px;font-size:36.2px;font-family:'Liberation Sans',sans-serif;color:#111;font-weight:bold"><c>先</c><c>行</c><c>研</c><c>究</c><c>レ</c><c>ビ</c><c>ュ</c><c>ー</c><c>（</c><c>←</c><c>見</c><c>出</c><c>し</c> 1<c>）</c></div>
<svg style="left:1624px;top:1091px" width="21" height="16" viewBox="0 0 21 16"><path d="M19.9 0 V9.9 H2.2 M6.1 4.2 L2.2 9.9 L6.1 15.7" fill="none" stroke="#6aa3dc" stroke-width="2.2" stroke-linejoin="miter"/></svg>
<div class="a" style="left:1022px;top:1216px;width:6px;height:6px;background:#111"></div>
<div class="t" style="left:1035px;top:1189px;font-size:35.5px;font-family:'Liberation Sans',sans-serif;color:#111;transform:scaleX(0.8);transform-origin:left">2.1.</div>
<svg style="left:1096px;top:1201px" width="19" height="12" viewBox="0 0 19 12"><path d="M0 6.0 H18 M12.0 0.8 L18 6.0 L12.0 11.2" fill="none" stroke="#6aa3dc" stroke-width="2"/></svg>
<div class="t" style="left:1131px;top:1191px;font-size:31.4px;font-family:'Liberation Sans',sans-serif;color:#111;"><c>ブ</c><c>ラ</c><c>ン</c><c>ド</c><c>価</c><c>値</c><c>の</c><c>概</c><c>念</c><c>（</c><c>←</c><c>見</c><c>出</c><c>し</c> 2<c>）</c></div>
<svg style="left:1635px;top:1199px" width="18" height="14" viewBox="0 0 18 14"><path d="M17.0 0 V8.7 H2 M5.3 3.6 L2 8.7 L5.3 13.7" fill="none" stroke="#6aa3dc" stroke-width="2" stroke-linejoin="miter"/></svg>
<div class="t" style="left:1035px;top:1284px;font-size:23.56px;font-family:'Liberation Serif',serif;color:#111;"><c>　</c><c>ブ</c><c>ラ</c><c>ン</c><c>ド</c><c>価</c><c>値</c><c>（</c>Brand Equity<c>）</c><c>と</c><c>は</c><c>，</c><c>ブ</c><c>ラ</c><c>ン</c><c>ド</c><c>名</c><c>や</c><c>シ</c><c>ン</c><c>ボ</c><c>ル</c><c>に</c><c>よ</c><c>っ</c><c>て</c><c>製</c><c>品</c><c>や</c><c>サ</c><c>ー</c><c>ビ</c><c>ス</c><c>に</c><c>も</c></div>
<div class="t" style="left:1035px;top:1326px;font-size:23.56px;font-family:'Liberation Serif',serif;color:#111;"><c>た</c><c>ら</c><c>さ</c><c>れ</c><c>る</c><c>付</c><c>加</c><c>的</c><c>な</c><c>価</c><c>値</c><c>を</c><c>指</c><c>す</c><c>。</c></div>
<svg style="left:1390px;top:1330px" width="14" height="12" viewBox="0 0 14 12"><path d="M13.2 0 V7.4 H1.6 M4.6 3.1 L1.6 7.4 L4.6 11.8" fill="none" stroke="#6aa3dc" stroke-width="1.6" stroke-linejoin="miter"/></svg>
<div class="a" style="left:1022px;top:1430px;width:6px;height:6px;background:#111"></div>
<div class="t" style="left:1035px;top:1403px;font-size:35.5px;font-family:'Liberation Sans',sans-serif;color:#111;transform:scaleX(0.8);transform-origin:left">2.2.</div>
<svg style="left:1096px;top:1416px" width="19" height="12" viewBox="0 0 19 12"><path d="M0 6.0 H18 M12.0 0.8 L18 6.0 L12.0 11.2" fill="none" stroke="#6aa3dc" stroke-width="2"/></svg>
<div class="t" style="left:1131px;top:1405px;font-size:31.4px;font-family:'Liberation Sans',sans-serif;color:#111;"><c>消</c><c>費</c><c>者</c><c>態</c><c>度</c><c>に</c><c>関</c><c>す</c><c>る</c><c>研</c><c>究</c><c>（</c><c>←</c><c>見</c><c>出</c><c>し</c> 2<c>）</c></div>
<svg style="left:1697px;top:1414px" width="18" height="14" viewBox="0 0 18 14"><path d="M17.0 0 V8.7 H2 M5.3 3.6 L2 8.7 L5.3 13.7" fill="none" stroke="#6aa3dc" stroke-width="2" stroke-linejoin="miter"/></svg>
<div class="t" style="left:1035px;top:1496px;font-size:23.56px;font-family:'Liberation Serif',serif;color:#111;"><c>　</c><c>消</c><c>費</c><c>者</c><c>態</c><c>度</c><c>は</c><c>，</c><c>認</c><c>知</c><c>的</c><c>要</c><c>素</c><c>，</c><c>感</c><c>情</c><c>的</c><c>要</c><c>素</c><c>，</c><c>行</c><c>動</c><c>的</c><c>要</c><c>素</c><c>か</c><c>ら</c><c>構</c><c>成</c><c>さ</c><c>れ</c><c>る</c><c>と</c><c>さ</c><c>れ</c><c>て</c><c>い</c><c>る</c><c>。</c></div>
<svg style="left:1966px;top:1500px" width="14" height="12" viewBox="0 0 14 12"><path d="M13.2 0 V7.4 H1.6 M4.6 3.1 L1.6 7.4 L4.6 11.8" fill="none" stroke="#6aa3dc" stroke-width="1.6" stroke-linejoin="miter"/></svg>
<div class="a" style="left:1022px;top:1578px;width:6px;height:6px;background:#111"></div>
<div class="t" style="left:1035px;top:1555px;font-size:29px;font-family:'Liberation Sans',sans-serif;color:#111;transform:scaleX(0.83);transform-origin:left">2.2.1.</div>
<svg style="left:1104px;top:1566px" width="17" height="11" viewBox="0 0 17 11"><path d="M0 5.5 H16 M10.5 0.8 L16 5.5 L10.5 10.2" fill="none" stroke="#6aa3dc" stroke-width="1.8"/></svg>
<div class="t" style="left:1129px;top:1555px;font-size:27.2px;font-family:'Liberation Sans',sans-serif;color:#111;"><c>認</c><c>知</c><c>的</c><c>要</c><c>素</c><c>（</c><c>←</c><c>見</c><c>出</c><c>し</c> 3<c>）</c></div>
<svg style="left:1452px;top:1563px" width="16" height="13" viewBox="0 0 16 13"><path d="M15.1 0 V8.1 H1.8 M4.9 3.4 L1.8 8.1 L4.9 12.7" fill="none" stroke="#6aa3dc" stroke-width="1.8" stroke-linejoin="miter"/></svg>
<div class="t" style="left:1035px;top:1626px;font-size:23.56px;font-family:'Liberation Serif',serif;color:#111;"><c>　</c><c>あ</c><c>の</c><c>イ</c><c>ー</c><c>ハ</c><c>ト</c><c>ー</c><c>ヴ</c><c>ォ</c><c>の</c><c>す</c><c>き</c><c>と</c><c>お</c><c>っ</c><c>た</c><c>風</c><c>、</c><c>夏</c><c>で</c><c>も</c><c>底</c><c>に</c><c>冷</c><c>た</c><c>さ</c><c>を</c><c>も</c><c>つ</c><c>青</c><c>い</c><c>そ</c><c>ら</c><c>、</c><c>う</c><c>つ</c><c>く</c><c>し</c><c>い</c><c>森</c></div>
<div class="t" style="left:1035px;top:1667px;font-size:23.56px;font-family:'Liberation Serif',serif;color:#111;"><c>で</c><c>飾</c><c>ら</c><c>れ</c><c>た</c><c>モ</c><c>リ</c><c>ー</c><c>オ</c><c>市</c><c>、</c><c>郊</c><c>外</c><c>の</c><c>ぎ</c><c>ら</c><c>ぎ</c><c>ら</c><c>ひ</c><c>か</c><c>る</c><c>草</c><c>の</c><c>波</c><c>。</c></div>
<svg style="left:1638px;top:1671px" width="14" height="12" viewBox="0 0 14 12"><path d="M13.2 0 V7.4 H1.6 M4.6 3.1 L1.6 7.4 L4.6 11.8" fill="none" stroke="#6aa3dc" stroke-width="1.6" stroke-linejoin="miter"/></svg>
<div class="a" style="left:1022px;top:1747px;width:6px;height:6px;background:#111"></div>
<div class="t" style="left:1035px;top:1724px;font-size:29px;font-family:'Liberation Sans',sans-serif;color:#111;transform:scaleX(0.83);transform-origin:left">2.2.2.</div>
<svg style="left:1104px;top:1735px" width="17" height="11" viewBox="0 0 17 11"><path d="M0 5.5 H16 M10.5 0.8 L16 5.5 L10.5 10.2" fill="none" stroke="#6aa3dc" stroke-width="1.8"/></svg>
<div class="t" style="left:1129px;top:1724px;font-size:27.2px;font-family:'Liberation Sans',sans-serif;color:#111;"><c>感</c><c>情</c><c>的</c><c>要</c><c>素</c><c>（</c><c>←</c><c>見</c><c>出</c><c>し</c> 3<c>）</c></div>
<svg style="left:1452px;top:1732px" width="16" height="13" viewBox="0 0 16 13"><path d="M15.1 0 V8.1 H1.8 M4.9 3.4 L1.8 8.1 L4.9 12.7" fill="none" stroke="#6aa3dc" stroke-width="1.8" stroke-linejoin="miter"/></svg>
<div class="t" style="left:1035px;top:1796px;font-size:23.56px;font-family:'Liberation Serif',serif;color:#111;"><c>　</c><c>あ</c><c>の</c><c>イ</c><c>ー</c><c>ハ</c><c>ト</c><c>ー</c><c>ヴ</c><c>ォ</c><c>の</c><c>す</c><c>き</c><c>と</c><c>お</c><c>っ</c><c>た</c><c>風</c><c>、</c><c>夏</c><c>で</c><c>も</c><c>底</c><c>に</c><c>冷</c><c>た</c><c>さ</c><c>を</c><c>も</c><c>つ</c><c>青</c><c>い</c><c>そ</c><c>ら</c><c>、</c><c>う</c><c>つ</c><c>く</c><c>し</c><c>い</c><c>森</c></div>
<div class="t" style="left:1035px;top:1836px;font-size:23.56px;font-family:'Liberation Serif',serif;color:#111;"><c>で</c><c>飾</c><c>ら</c><c>れ</c><c>た</c><c>モ</c><c>リ</c><c>ー</c><c>オ</c><c>市</c><c>、</c><c>郊</c><c>外</c><c>の</c><c>ぎ</c><c>ら</c><c>ぎ</c><c>ら</c><c>ひ</c><c>か</c><c>る</c><c>草</c><c>の</c><c>波</c><c>。</c></div>
<svg style="left:1638px;top:1840px" width="14" height="12" viewBox="0 0 14 12"><path d="M13.2 0 V7.4 H1.6 M4.6 3.1 L1.6 7.4 L4.6 11.8" fill="none" stroke="#6aa3dc" stroke-width="1.6" stroke-linejoin="miter"/></svg>
<svg style="left:994px;top:1870px" width="40" height="14" viewBox="0 0 40 14"><path d="M0 2 H38 V14" fill="none" stroke="#b5b5b5" stroke-width="2.5"/></svg>
<svg style="left:2003px;top:1870px" width="40" height="14" viewBox="0 0 40 14"><path d="M2 14 V2 H40" fill="none" stroke="#b5b5b5" stroke-width="2.5"/></svg>
<!-- scrollbars -->
<div class="a" style="left:2997px;top:406px;width:19px;height:1472px;background:#f9f9f9"></div>
<div class="a" style="left:3000px;top:478px;width:15px;height:369px;border-radius:8px;background:#7f7f7f"></div>
<div class="a" style="left:49px;top:1891px;width:2935px;height:19px;background:#f9f9f9"></div>
<div class="a" style="left:2992px;top:1886px;width:28px;height:28px;background:#f9f9f9"></div>
<!-- status bar -->
<div class="a" id="status" style="left:0;top:1917px;width:3024px;height:45px;background:linear-gradient(#e7e7e7,#dcdcdc);border-top:2px solid #a8a8a8"></div>
<!-- status content -->
<div class="t" style="left:48px;top:1931px;font-size:22px;color:#5a5a5a;">1/3 <c>ペ</c><c>ー</c><c>ジ</c></div>
<div class="t" style="left:196px;top:1931px;font-size:22px;color:#5a5a5a;">1489 <c>単</c><c>語</c></div>
<svg style="left:343px;top:1929px" width="33" height="28" viewBox="0 0 33 28"><path d="M16 4 C12 1 5 1 1.5 2 V22 C5 21 12 21 16 24 V4 M16 24 V27" fill="none" stroke="#5a5a5a" stroke-width="2"/><path d="M16 4 C18 2.5 20 2 22 2 M16 24 C18 22 20 22 22 22" fill="none" stroke="#5a5a5a" stroke-width="2"/><path d="M24 5 L31 12 M31 5 L24 12" stroke="#5a5a5a" stroke-width="2"/></svg>
<div class="t" style="left:413px;top:1931px;font-size:22px;color:#5a5a5a;"><c>日</c><c>本</c><c>語</c></div>
<svg style="left:519px;top:1928px" width="33" height="30" viewBox="0 0 33 30"><circle cx="6" cy="5" r="4.5" fill="#5a5a5a"/><path d="M9 5 H29 a2 2 0 0 1 2 2 V10 M20 5 V22 M6 10 V22 H12 M4 27 H25 a3 3 0 0 0 3 -3" fill="none" stroke="#5a5a5a" stroke-width="2.4"/><rect x="3" y="23" width="22" height="5" rx="2" fill="#5a5a5a"/></svg>
<svg style="left:582px;top:1926px" width="35" height="35" viewBox="0 0 35 35"><circle cx="15" cy="5" r="3.5" fill="none" stroke="#5a5a5a" stroke-width="2"/><path d="M3 10 C8 12 22 12 27 10 M15 12 V20 L9 32 M15 20 L17 24" fill="none" stroke="#5a5a5a" stroke-width="2" stroke-linecap="round"/><path d="M19 26 L23 31 L33 18" fill="none" stroke="#5a5a5a" stroke-width="2.2" stroke-linecap="round"/></svg>
<div class="t" style="left:625px;top:1931px;font-size:22px;color:#5a5a5a;"><c>ア</c><c>ク</c><c>セ</c><c>シ</c><c>ビ</c><c>リ</c><c>テ</c><c>ィ</c>: <c>問</c><c>題</c><c>あ</c><c>り</c><c>ま</c><c>せ</c><c>ん</c></div>
<svg style="left:2133px;top:1930px" width="32" height="25" viewBox="0 0 32 25"><rect x="1.5" y="1.5" width="29" height="22" rx="2" fill="none" stroke="#5a5a5a" stroke-width="2"/><path d="M6 9 V6 H9 M23 6 H26 V9 M26 16 V19 H23 M9 19 H6 V16" fill="none" stroke="#5a5a5a" stroke-width="2"/></svg>
<div class="t" style="left:2181px;top:1931px;font-size:22px;color:#5a5a5a;"><c>フ</c><c>ォ</c><c>ー</c><c>カ</c><c>ス</c></div>
<div class="a" style="left:2312px;top:1919px;width:74px;height:45px;background:#ababab"></div>
<svg style="left:2334px;top:1927px" width="30" height="30" viewBox="0 0 30 30"><rect x="2" y="2" width="25" height="25" rx="2.5" fill="#8c8c8c" stroke="#fff" stroke-width="2.6"/><path d="M5 6.5 H24 M5 10.8 H24 M5 15 H24 M5 19.2 H24 M5 23.4 H24" stroke="#fff" stroke-width="2.2"/></svg>
<svg style="left:2404px;top:1926px" width="34" height="34" viewBox="0 0 34 34"><path d="M1.5 1.5 H22 V12 M1.5 1.5 V24 H14" fill="none" stroke="#5a5a5a" stroke-width="2"/><path d="M5 7 H18 M5 12 H16 M5 17 H13" stroke="#5a5a5a" stroke-width="2"/><circle cx="24" cy="24" r="9" fill="#5a5a5a"/><path d="M18 20 C21 22 22 19 24 21 C26 23 23 26 26 28 M29 18 C27 19 28 22 31 22" fill="none" stroke="#e3e3e3" stroke-width="1.6"/></svg>
<svg style="left:2478px;top:1930px" width="32" height="26" viewBox="0 0 32 26"><path d="M1 2 H5 M9 2 H31 M5 9 H7 M11 9 H31 M5 16 H7 M11 16 H31 M1 23 H5 M9 23 H31" stroke="#5a5a5a" stroke-width="2.2"/></svg>
<svg style="left:2549px;top:1930px" width="31" height="26" viewBox="0 0 31 26"><path d="M1 2 H30 M1 9 H25 M1 16 H30 M1 23 H25" stroke="#5a5a5a" stroke-width="2.2"/></svg>
<div class="a" style="left:2616px;top:1940px;width:16px;height:4px;background:#5a5a5a"></div>
<div class="a" style="left:2645px;top:1938px;width:200px;height:8px;border-radius:4px;background:#9d9d9d"></div>
<div class="a" style="left:2730px;top:1928px;width:35px;height:27px;border-radius:14px;background:#fff;box-shadow:0 1px 2px rgba(0,0,0,0.25)"></div>
<div class="a" style="left:2859px;top:1940px;width:17px;height:4px;background:#5a5a5a"></div><div class="a" style="left:2865.5px;top:1933.5px;width:4px;height:17px;background:#5a5a5a"></div>
<div class="t" style="left:2912px;top:1929px;font-size:24px;color:#5a5a5a;">114%</div>
<div class="a" style="left:2846px;top:1740px;width:88px;height:88px;border-radius:50%;background:#f8f8f8;box-shadow:0 6px 18px rgba(0,0,0,0.12)"></div>
<svg style="left:2860px;top:1760px" width="54" height="50" viewBox="0 0 54 50"><defs><linearGradient id="cgA" x1="0" y1="0" x2="0" y2="1"><stop offset="0" stop-color="#3f97ee"/><stop offset="0.5" stop-color="#6fb35a"/><stop offset="1" stop-color="#ecc92c"/></linearGradient><linearGradient id="cgB" x1="0" y1="0" x2="0" y2="1"><stop offset="0" stop-color="#a24ee6"/><stop offset="0.5" stop-color="#e05c94"/><stop offset="1" stop-color="#f1a55a"/></linearGradient></defs><path d="M31 4 H38 C41 4 42.5 8 43.5 12 L44.5 15 H28.3 Z" fill="#2b4ccc"/><path d="M17 4 H31 L24 32.4 H11 C8 32.4 7.8 30 8.6 27 L13.5 10 C14.5 6 15.5 4 17 4 Z" fill="url(#cgA)"/><path d="M19 32.4 H29.8 L27 43.7 C25 43.7 23 43 22 40 Z" fill="#e8683a"/><path d="M36.3 15 H47 C50 15 51 18 50 21 L45 39 C44 42 42 43.7 39 43.7 H29.5 Z" fill="url(#cgB)"/></svg>
<!-- panel -->
<div class="a" id="panel" style="left:20px;top:288px;width:809px;height:1135px;background:#fff;border-radius:8px;box-shadow:1px 1px 0 #9a9a9a,0 8px 24px rgba(0,0,0,0.22)"></div>
<!-- panel content -->
<div class="a" style="left:20px;top:296px;width:776px;height:47px;background:linear-gradient(#f5f5f5,#ededed);border-bottom:1px solid #dedede"></div>
<div class="t" style="left:39px;top:308px;font-size:22px;color:#222;-webkit-text-stroke:0.25px #222;"><c>自</c><c>動</c><c>作</c><c>成</c><c>の</c><c>目</c><c>次</c></div>
<div class="a" style="left:802px;top:302px;width:22px;height:987px;border-radius:11px;background:#f3f3f3"></div>
<div class="a" style="left:802px;top:302px;width:22px;height:388px;border-radius:11px;background:#7f7f7f"></div>
<div class="t" style="left:206px;width:400px;text-align:center;top:355px;font-size:17px;color:#222;letter-spacing:1px"><c>ク</c><c>ラ</c><c>シ</c><c>ッ</c><c>ク</c></div>
<div class="t" style="left:51px;top:417px;font-size:25px;color:#2f5573;"><c>目</c><c>次</c></div>
<div class="t it" style="left:53px;top:485px;font-size:22px;font-family:'Liberation Serif',serif;color:#111;font-weight:bold;font-style:italic">1.</div>
<div class="t it" style="left:86px;top:485px;font-size:21px;font-family:'Liberation Serif',serif;color:#111;font-weight:bold;font-style:italic"><c>見</c><c>出</c><c>し</c></div>
<div class="t it" style="left:162px;top:485px;font-size:22px;font-family:'Liberation Serif',serif;color:#111;font-weight:bold;font-style:italic">1</div>
<div class="a" style="left:178px;top:501px;width:598px;height:4px;background-image:radial-gradient(circle at 50% 50%,#111 1.45px,transparent 1.95px);background-size:5.9px 4px;background-repeat:repeat-x"></div>
<div class="t it" style="left:776px;top:485px;font-size:22px;font-family:'Liberation Serif',serif;color:#111;font-weight:bold;font-style:italic">1</div>
<div class="t" style="left:69px;top:536px;font-size:21px;font-family:'Liberation Serif',serif;color:#111;font-weight:bold">1.1.</div>
<div class="t" style="left:124px;top:536px;font-size:20px;font-family:'Liberation Serif',serif;color:#111;font-weight:bold"><c>見</c><c>出</c><c>し</c></div>
<div class="t" style="left:192px;top:536px;font-size:21px;font-family:'Liberation Serif',serif;color:#111;font-weight:bold">2</div>
<div class="a" style="left:208px;top:551px;width:566px;height:4px;background-image:radial-gradient(circle at 50% 50%,#111 1.45px,transparent 1.95px);background-size:5.9px 4px;background-repeat:repeat-x"></div>
<div class="t" style="left:775px;top:536px;font-size:21px;font-family:'Liberation Serif',serif;color:#111;font-weight:bold">1</div>
<div class="t" style="left:206px;width:400px;text-align:center;top:600px;font-size:17px;color:#222;letter-spacing:1px"><c>コ</c><c>ン</c><c>テ</c><c>ン</c><c>ポ</c><c>ラ</c><c>リ</c></div>
<div class="t" style="left:51px;top:663px;font-size:25px;color:#2f5573;"><c>目</c><c>次</c></div>
<div class="t" style="left:49px;top:730px;font-size:20px;font-family:'Liberation Serif',serif;color:#111;font-weight:bold">1.</div>
<div class="t" style="left:87px;top:730px;font-size:20px;font-family:'Liberation Serif',serif;color:#111;font-weight:bold"><c>見</c><c>出</c><c>し</c></div>
<div class="t" style="left:154px;top:730px;font-size:20px;font-family:'Liberation Serif',serif;color:#111;font-weight:bold">1</div>
<div class="a" style="left:170px;top:745px;width:604px;height:4px;background-image:radial-gradient(circle at 50% 50%,#111 1.45px,transparent 1.95px);background-size:5.9px 4px;background-repeat:repeat-x"></div>
<div class="t" style="left:775px;top:730px;font-size:20px;font-family:'Liberation Serif',serif;color:#111;font-weight:bold">1</div>
<div class="a" style="left:49px;top:752px;width:736px;height:2px;background:#333"></div>
<div class="t" style="left:49px;top:779px;font-size:20px;font-family:'Liberation Serif',serif;color:#111;font-weight:bold">1.1.</div>
<div class="t" style="left:124px;top:779px;font-size:20px;font-family:'Liberation Serif',serif;color:#111;font-weight:bold"><c>見</c><c>出</c><c>し</c></div>
<div class="t" style="left:190px;top:779px;font-size:20px;font-family:'Liberation Serif',serif;color:#111;font-weight:bold">2</div>
<div class="a" style="left:203px;top:795px;width:571px;height:4px;background-image:radial-gradient(circle at 50% 50%,#111 1.45px,transparent 1.95px);background-size:5.9px 4px;background-repeat:repeat-x"></div>
<div class="t" style="left:775px;top:779px;font-size:20px;font-family:'Liberation Serif',serif;color:#111;font-weight:bold">1</div>
<div class="t" style="left:206px;width:400px;text-align:center;top:843px;font-size:17px;color:#222;letter-spacing:1px"><c>シ</c><c>ン</c><c>プ</c><c>ル</c></div>
<div class="t" style="left:51px;top:906px;font-size:25px;color:#2f5573;"><c>目</c><c>次</c></div>
<div class="t" style="left:48px;top:975px;font-size:19px;font-family:'Liberation Serif',serif;color:#111;font-weight:bold">1.</div>
<div class="t" style="left:87px;top:975px;font-size:19px;font-family:'Liberation Serif',serif;color:#111;font-weight:bold"><c>見</c><c>出</c><c>し</c></div>
<div class="t" style="left:150px;top:975px;font-size:19px;font-family:'Liberation Serif',serif;color:#111;font-weight:bold">1</div>
<div class="a" style="left:163px;top:989px;width:611px;height:4px;background-image:radial-gradient(circle at 50% 50%,#111 1.45px,transparent 1.95px);background-size:5.9px 4px;background-repeat:repeat-x"></div>
<div class="t" style="left:775px;top:975px;font-size:19px;font-family:'Liberation Serif',serif;color:#111;font-weight:bold">1</div>
<div class="t it" style="left:69px;top:1025px;font-size:19px;font-family:'Liberation Serif',serif;color:#111;font-style:italic">1.1.</div>
<div class="t it" style="left:124px;top:1025px;font-size:19px;font-family:'Liberation Serif',serif;color:#111;font-style:italic"><c>見</c><c>出</c><c>し</c></div>
<div class="t it" style="left:190px;top:1025px;font-size:19px;font-family:'Liberation Serif',serif;color:#111;font-style:italic">2</div>
<div class="a" style="left:203px;top:1039px;width:571px;height:4px;background-image:radial-gradient(circle at 50% 50%,#111 1.10px,transparent 1.60px);background-size:5.9px 4px;background-repeat:repeat-x"></div>
<div class="t it" style="left:775px;top:1025px;font-size:19px;font-family:'Liberation Serif',serif;color:#111;font-style:italic">1</div>
<div class="t" style="left:206px;width:400px;text-align:center;top:1088px;font-size:17px;color:#222;letter-spacing:1px"><c>フ</c><c>ォ</c><c>ー</c><c>マ</c><c>ル</c></div>
<div class="t" style="left:51px;top:1150px;font-size:25px;color:#2f5573;"><c>目</c><c>次</c></div>
<div class="t" style="left:48px;top:1219px;font-size:19px;font-family:'Liberation Serif',serif;color:#111;font-weight:bold">1.</div>
<div class="t" style="left:87px;top:1219px;font-size:19px;font-family:'Liberation Serif',serif;color:#111;font-weight:bold"><c>見</c><c>出</c><c>し</c></div>
<div class="t" style="left:150px;top:1219px;font-size:19px;font-family:'Liberation Serif',serif;color:#111;font-weight:bold">1</div>
<div class="a" style="left:163px;top:1232px;width:611px;height:4px;background-image:radial-gradient(circle at 50% 50%,#111 1.45px,transparent 1.95px);background-size:5.9px 4px;background-repeat:repeat-x"></div>
<div class="t" style="left:775px;top:1219px;font-size:19px;font-family:'Liberation Serif',serif;color:#111;font-weight:bold">1</div>
<div class="t" style="left:68px;top:1268px;font-size:19px;font-family:'Liberation Serif',serif;color:#111;">1.1.</div>
<div class="t" style="left:124px;top:1268px;font-size:19px;font-family:'Liberation Serif',serif;color:#111;"><c>見</c><c>出</c><c>し</c></div>
<div class="t" style="left:190px;top:1268px;font-size:19px;font-family:'Liberation Serif',serif;color:#111;">2</div>
<div class="a" style="left:198px;top:1282px;width:576px;height:4px;background-image:radial-gradient(circle at 50% 50%,#111 1.10px,transparent 1.60px);background-size:5.9px 4px;background-repeat:repeat-x"></div>
<div class="t" style="left:775px;top:1268px;font-size:19px;font-family:'Liberation Serif',serif;color:#111;">1</div>
<div class="a" style="left:20px;top:1308px;width:810px;height:4px;background:#e6e6e6"></div>
<svg style="left:65px;top:1323px" width="30" height="38" viewBox="0 0 30 38"><path d="M1.2 1.2 H19 L28.8 11 V36.8 H1.2 Z" fill="#fff" stroke="#333" stroke-width="2.2"/><path d="M19 1.2 V11 H28.8" fill="none" stroke="#333" stroke-width="2.2"/><path d="M6 14 H11 M14 14 H22 M6 20 H11 M14 20 H22 M6 26 H11 M14 26 H22 M6 32 H11 M14 32 H22" stroke="#555" stroke-width="1.8"/></svg>
<div class="t" style="left:109px;top:1332px;font-size:25px;color:#1a1a1a;-webkit-text-stroke:0.45px #1a1a1a;"><c>ユ</c><c>ー</c><c>ザ</c><c>ー</c><c>設</c><c>定</c><c>の</c><c>目</c><c>次</c>...</div>
<svg style="left:65px;top:1371px" width="38" height="40" viewBox="0 0 38 40"><path d="M1.2 36 V1.2 H19 L28.8 11 V22 M1.2 36 H14" fill="none" stroke="#333" stroke-width="2.2"/><path d="M19 1.2 V11 H28.8" fill="none" stroke="#333" stroke-width="2.2"/><path d="M6 14 H11 M6 20 H13 M6 26 H11" stroke="#555" stroke-width="1.8"/><path d="M14 22 L35 39 M35 22 L14 39" stroke="#c8443a" stroke-width="2.4"/></svg>
<div class="t" style="left:109px;top:1380px;font-size:25px;color:#1a1a1a;-webkit-text-stroke:0.45px #1a1a1a;"><c>目</c><c>次</c><c>の</c><c>削</c><c>除</c></div>
<div class="circ" style="left:955.5px;top:722.5px">1</div>
<div class="circ" style="left:592.0px;top:155.0px">2</div>
<div class="circ" style="left:66.5px;top:186.7px">3</div>
<div class="circ" style="left:16.5px;top:814.7px">4</div>
<div class="circ" style="left:406.5px;top:1310.7px">5</div>
</body></html>
